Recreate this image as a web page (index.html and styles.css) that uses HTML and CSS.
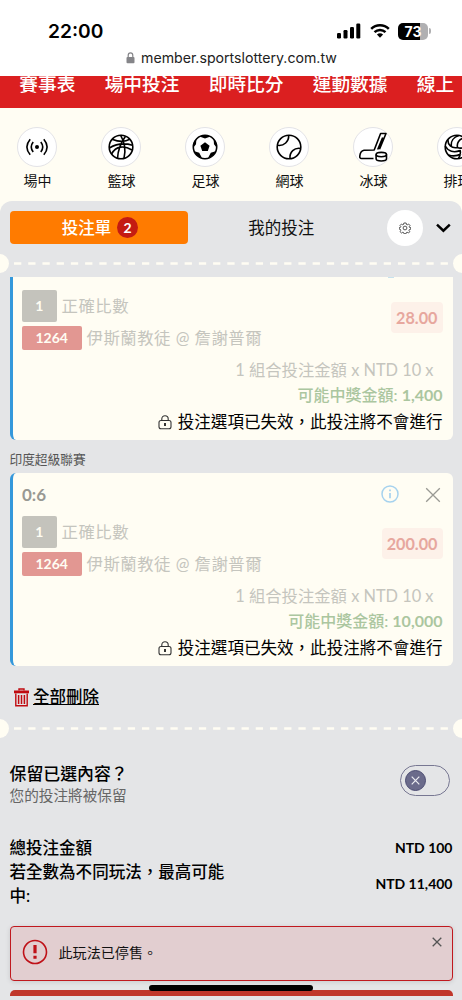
FILE: index.html
```html
<!DOCTYPE html>
<html lang="zh-Hant">
<head>
<meta charset="utf-8">
<title>投注單</title>
<link rel="stylesheet" href="styles.css">
</head>
<body>
<div class="screen">
  <header class="status">
    <div class="status-row">
      <span class="clock">22:00</span>
      <div class="indicators">
        <svg class="signal" width="24" height="16" viewBox="0 0 24 16"><rect x="0" y="10" width="4" height="5.500" rx="1.200"/><rect x="6.500" y="7" width="4" height="8.500" rx="1.200"/><rect x="13" y="4" width="4" height="11.500" rx="1.200"/><rect x="19.300" y="0.500" width="4" height="15" rx="1.200"/></svg>
        <svg class="wifi" width="20" height="16" viewBox="0 0 20 16"><path d="M1.200 5.900A12.600 12.600 0 0 1 18.800 5.900M4.500 9.200A8 8 0 0 1 15.500 9.200" fill="none" stroke="#000" stroke-width="2.500"/><path d="M10 14.700L6.900 11.600a4.500 4.500 0 0 1 6.200 0z"/></svg>
        <div class="battery"><span>73</span></div><i class="battery-tip"></i>
      </div>
    </div>
    <div class="address">
      <svg width="9" height="12" viewBox="0 0 9 12"><rect x="0.500" y="5" width="8" height="6.300" rx="1" fill="#858589"/><path d="M2.200 5.500V3.500a2.300 2.600 0 0 1 4.600 0v2" fill="none" stroke="#858589" stroke-width="1.200"/></svg>
      <span>member.sportslottery.com.tw</span>
    </div>
  </header>

  <nav class="nav"><span>賽事表</span><span>場中投注</span><span>即時比分</span><span>運動數據</span><span>線上</span></nav>

  <div class="sports">
    <div class="sport"><div class="disc"><svg width="28" height="28" viewBox="0 0 28 28"><g class="ln"><path d="M7.200 6.200Q0.600 14 7.200 21.800M20.800 6.200Q27.400 14 20.800 21.800M10.200 9Q6.300 14 10.200 19M17.800 9Q21.700 14 17.800 19"/></g><circle cx="14" cy="14" r="2"/></svg></div><span>場中</span></div>
    <div class="sport"><div class="disc"><svg width="28" height="28" viewBox="0 0 28 28"><g class="ln"><circle cx="14" cy="14" r="11.800"/><path d="M13.500 2.200C17 8 19 17 17 25.300M5 6.200C12 9 19 8.500 22.800 6.300M2.400 15C9 11 18 10 25.500 12.300M4.500 21C9 13 17 12 25 17M10.500 25.200C11 17 15 8 18.500 3.200"/></g></svg></div><span>籃球</span></div>
    <div class="sport"><div class="disc"><svg width="28" height="28" viewBox="0 0 28 28"><g class="ln"><circle cx="14" cy="14" r="11.700"/></g><path d="M14 9.200l4.600 3.500-1.800 5.400h-5.600l-1.800-5.400zM8.500 3.600L14 5.600l5.500-2Q14 .8 8.500 3.600zM22.600 6l.4 5.300 3 3.600Q26.600 9.500 22.600 6zM24.600 18.300l-4.800 1.500-2.800 5.200Q22.500 24 24.600 18.300zM11 25l-2.800-5.200-4.800-1.500Q5.500 24 11 25zM2 14.900l3-3.600L5.400 6Q1.400 9.500 2 14.900z"/></svg></div><span>足球</span></div>
    <div class="sport"><div class="disc"><svg width="28" height="28" viewBox="0 0 28 28"><g class="ln"><circle cx="14" cy="14" r="11.800"/><path d="M13.700 2.300C14 8.500 9 13.300 2.500 12.300M15 25.600C14.400 19 19.300 14.400 25.700 15.500"/></g></svg></div><span>網球</span></div>
    <div class="sport"><div class="disc"><svg width="30" height="30" viewBox="0 0 30 30"><g class="ln"><path d="M15.500 26.500H3.500Q1.500 26.500 1.800 24Q2.300 19 6 18.300L16.200 18L22.600 1.500H28L21.500 17.200M24.700 5.500L19.700 17.500"/><ellipse cx="23.300" cy="22.600" rx="5.200" ry="2.200"/><path d="M18.100 22.600v4.200c0 3 10.400 3 10.400 0v-4.200"/></g></svg></div><span>冰球</span></div>
    <div class="sport"><div class="disc"><svg width="28" height="28" viewBox="0 0 28 28"><g class="ln"><circle cx="14" cy="14" r="11.800"/><path d="M5 6.500C4.500 12 8.500 15.500 14.500 14.500M2.300 13C5 18.500 11 20 17 17.500M5.500 22C10 23.500 14.500 23 18 20.500M14.500 14.500C13.500 10 16 6 21.500 5M8.500 14C7.500 8.500 10.500 4 16 2.500M14.500 14.500C18 16 22 14 25 10M17 17c1 3 0 6-1.500 8.500"/></g></svg></div><span>排球</span></div>
  </div>

  <main class="slip">
    <div class="tabs">
      <div class="tab active"><span>投注單</span><b>2</b></div>
      <div class="tab">我的投注</div>
      <div class="gear"><svg width="12" height="12" viewBox="0 0 24 24"><g fill="none" stroke="#444" stroke-width="1.800" stroke-linejoin="round"><circle cx="12" cy="12" r="3.800"/><path d="M9.700 2h4.600l.7 3 1.500.6L19.200 4 22 7l-1.600 2.500.4 1.200 2.700.3v3.500l-3 .9-.6 1.300 1.600 2.800L19 22l-2.800-1.600-1.300.5-.8 2.600H9.900l-.9-2.600-1.300-.5L5 22l-3-2.800 1.600-2.600L3 15l-2.500-.6V11l2.700-.5.5-1.300L2 7l3-3 2.500 1.600L9 5z"/></g></svg></div>
      <svg class="chev" width="15" height="10" viewBox="0 0 15 10"><path d="M1 1.700l6.400 6 6.400-6" fill="none" stroke="#000" stroke-width="2.500"/></svg>
    </div>
    <div class="perforation"><i></i><svg width="434" height="3"><path d="M0 1.500H434" stroke="#fffdf3" stroke-width="2.600" stroke-dasharray="7.300 6.920"/></svg><i></i></div>

    <section class="bet clipped">
      <i class="info-edge"></i>
      <div class="pick">
        <div class="match"><div class="line"><b class="num">1</b><span>正確比數</span></div><div class="line"><b class="code">1264</b><span>伊斯蘭教徒 @ 詹謝普爾</span></div></div>
        <b class="odds">28.00</b>
      </div>
      <div class="stake">1 組合投注金額 x NTD 10 x</div>
      <div class="win">可能中獎金額: <b>1,400</b></div>
      <div class="invalid"><svg width="14" height="15" viewBox="0 0 14 15"><g fill="none" stroke="#333" stroke-width="1.100"><rect x="1" y="5.500" width="12" height="8.300" rx="2"/><path d="M3.800 5.500V4a3.200 3.200 0 0 1 6.400 0v1.500"/></g><path d="M7 8v3" stroke="#111" stroke-width="1.700"/></svg><span>投注選項已失效，此投注將不會進行</span></div>
    </section>

    <div class="league">印度超級聯賽</div>

    <section class="bet">
      <div class="bet-head"><b>0:6</b>
        <svg width="18" height="18" viewBox="0 0 18 18"><circle cx="9" cy="9" r="8" fill="none" stroke="#a6d2ee" stroke-width="1.500"/><path d="M9 4.600v1.700M9 8v5.300" stroke="#a6d2ee" stroke-width="1.700"/></svg>
        <svg width="16" height="16" viewBox="0 0 16 16"><path d="M1.200 1.200l13.600 13.600M14.800 1.200L1.200 14.800" stroke="#999993" stroke-width="1.300"/></svg>
      </div>
      <div class="pick">
        <div class="match"><div class="line"><b class="num">1</b><span>正確比數</span></div><div class="line"><b class="code">1264</b><span>伊斯蘭教徒 @ 詹謝普爾</span></div></div>
        <b class="odds">200.00</b>
      </div>
      <div class="stake">1 組合投注金額 x NTD 10 x</div>
      <div class="win">可能中獎金額: <b>10,000</b></div>
      <div class="invalid"><svg width="14" height="15" viewBox="0 0 14 15"><g fill="none" stroke="#333" stroke-width="1.100"><rect x="1" y="5.500" width="12" height="8.300" rx="2"/><path d="M3.800 5.500V4a3.200 3.200 0 0 1 6.400 0v1.500"/></g><path d="M7 8v3" stroke="#111" stroke-width="1.700"/></svg><span>投注選項已失效，此投注將不會進行</span></div>
    </section>

    <div class="clear"><svg width="15" height="19" viewBox="0 0 15 19"><g fill="none" stroke="#c00b10" stroke-width="1.400"><path d="M5 2.500V1h5v1.500M1.800 5.500v12.200h11.400V5.500"/><path d="M4.600 7v9M7.500 7v9M10.400 7v9" stroke-width="1.500"/></g><path d="M0 2.500h15v2.800H0z" fill="#c00b10"/></svg><span>全部刪除</span></div>

    <div class="perforation lower"><i></i><svg width="434" height="3"><path d="M0 1.500H434" stroke="#fffdf3" stroke-width="2.600" stroke-dasharray="7.300 6.920"/></svg><i></i></div>

    <div class="keep">
      <div><div class="keep-title">保留已選內容？</div><div class="keep-sub">您的投注將被保留</div></div>
      <div class="switch"><span><svg width="9" height="9" viewBox="0 0 9 9"><path d="M.7.7l7.600 7.600M8.300.7L.7 8.300" stroke="#eeeef3" stroke-width="1.200"/></svg></span></div>
    </div>

    <div class="totals">
      <div class="total"><span>總投注金額</span><b>NTD 100</b></div>
      <div class="total"><span>若全數為不同玩法，最高可能中:</span><b>NTD 11,400</b></div>
    </div>

    <div class="alert">
      <svg width="26" height="26" viewBox="0 0 26 26"><circle cx="13" cy="13" r="11.500" fill="none" stroke="#bf1118" stroke-width="1.600"/><path d="M13 6v8.200M13 16.800v3" stroke="#bf1118" stroke-width="3.200"/></svg>
      <span>此玩法已停售。</span>
      <svg class="dismiss" width="10" height="10" viewBox="0 0 10 10"><path d="M.7.7l8.600 8.600M9.300.7L.7 9.300" stroke="#555" stroke-width="1.300"/></svg>
    </div>
    <div class="submit"></div>
  </main>
  <div class="home-bar"></div>
</div>
</body>
</html>
```

FILE: styles.css
```css
* { box-sizing: border-box; }
body { margin: 0; font-family: Lato, "Noto Sans CJK TC", sans-serif; color: #111; }
svg { display: block; flex: none; }
.screen { position: relative; width: 462px; height: 1000px; overflow: hidden; background: #fffdf3; }

.status { height: 76px; background: #fff; padding-top: 20px; font-family: Inter, sans-serif; }
.status-row { display: flex; justify-content: space-between; height: 22px; padding: 0 31px 0 48px; align-items: center; }
.clock { font-size: 19.200px; font-weight: 600; line-height: 22px; color: #000; }
.indicators { display: flex; align-items: center; }
.wifi { margin: 0 8px 0 9px; }
.battery { width: 30px; height: 17px; border-radius: 5px; background: linear-gradient(90deg, #000 73%, #b0b0b2 73%); color: #fff; font-size: 14px; font-weight: 700; line-height: 17px; text-align: center; }
.battery-tip { width: 2px; height: 6px; margin-left: 1px; border-radius: 0 2px 2px 0; background: #b0b0b2; }
.address { display: flex; gap: 6px; align-items: center; height: 18px; margin-top: 7px; padding-left: 126px; font-size: 14.150px; color: #222; line-height: 18px; white-space: nowrap; }

.nav { display: flex; gap: 29.300px; height: 32px; padding-left: 19.300px; overflow: hidden; background: #db1f20; color: #fff; font-size: 18.700px; font-weight: 500; line-height: 17px; white-space: nowrap; }

.sports { display: flex; gap: 44px; width: 540px; height: 93px; padding: 19px 0 0 17.400px; }
.sport { width: 40px; flex: none; display: flex; flex-direction: column; align-items: center; font-size: 14px; line-height: 20px; white-space: nowrap; }
.sport > span { margin-top: 4px; }
.disc { width: 40px; height: 40px; border: 1px solid #e3e3e7; border-radius: 50%; background: #fff; display: flex; align-items: center; justify-content: center; }
.ln { fill: none; stroke: #000; stroke-width: 1.600; stroke-linejoin: round; }

.slip { height: 799px; border-radius: 12px 12px 0 0; background: #e4e5e7; }
.tabs { display: flex; align-items: center; height: 53px; padding: 0 11px 0 9.500px; }
.tab { width: 179px; height: 33px; display: flex; align-items: center; justify-content: center; gap: 6px; font-size: 16.500px; line-height: 24px; }
.tab:nth-child(2) { width: 185px; padding-left: 1px; }
.tab.active { padding-left: 2px; background: #ff7b00; border-radius: 4px; color: #fff; font-weight: 500; }
.tab.active b { width: 21px; height: 21px; border-radius: 50%; background: #c41b12; font-size: 14px; line-height: 21px; text-align: center; }
.gear { width: 36px; height: 36px; margin-left: 14px; border-radius: 50%; background: #fff; display: flex; align-items: center; justify-content: center; }
.chev { margin-left: 13px; }

.perforation { display: flex; align-items: center; justify-content: center; height: 19px; gap: 5px; margin: 0 -10px; }
.perforation i { width: 19px; height: 19px; border-radius: 50%; flex: none; background: #fffdf3; }

.bet { margin: 0 9.500px; height: 193px; padding: 0 10px 0 9.500px; border-left: 3.500px solid #3498db; border-radius: 6px; background: #fffdf3; }
.bet.clipped { position: relative; height: 163px; margin-top: 4px; padding-top: 13px; border-radius: 0 0 6px 6px; }
.info-edge { position: absolute; left: 375px; top: 0; width: 6px; height: 1px; background: #c7e2ed; }
.bet-head { display: flex; align-items: center; height: 43px; color: #999993; }
.bet-head b { flex: 1; font-size: 17px; }
.bet-head svg { margin-top: -1px; }
.bet-head svg + svg { margin: 0 2px 0 26px; }
.pick { display: flex; align-items: center; justify-content: space-between; height: 60px; }
.match { display: flex; flex-direction: column; gap: 4px; }
.line { display: flex; align-items: center; gap: 5px; font-size: 16.400px; letter-spacing: .5px; line-height: 24px; color: #c5c5be; white-space: nowrap; }
.line b { font-size: 14px; letter-spacing: 0; color: #fffdf3; text-align: center; border-radius: 2px; }
.num { width: 34.500px; height: 32px; background: #c4c3bc; line-height: 32px; }
.code { width: 59.500px; height: 24px; background: #e29792; line-height: 24px; }
.odds { padding: 0 5px; height: 31px; margin-top: -6px; border-radius: 4px; background: #fdf1e9; color: #e7a79e; font-size: 16.200px; line-height: 31px; }
.stake { margin-top: 7px; padding-right: 9px; height: 25px; text-align: right; font-size: 16.350px; line-height: 25px; color: #c5c5be; }
.win { height: 25px; text-align: right; font-size: 16px; font-weight: 500; line-height: 25px; color: #abc69f; }
.invalid { display: flex; justify-content: flex-end; align-items: center; gap: 6px; height: 31px; font-size: 16.560px; line-height: 31px; color: #000; }
.league { height: 33px; padding: 0 9.500px; font-size: 12.700px; line-height: 38px; color: #555; }

.clear { display: flex; align-items: center; gap: 4px; height: 62px; padding-left: 14px; font-size: 16.500px; font-weight: 500; line-height: 24px; color: #000; text-decoration: underline; }
.perforation.lower { margin-top: -9px; }
.keep { display: flex; justify-content: space-between; align-items: flex-start; height: 48px; margin-top: 24px; padding: 0 12px 0 9.500px; }
.keep-title { font-size: 16.900px; font-weight: 500; line-height: 24px; color: #000; }
.keep-sub { font-size: 14.650px; line-height: 20px; color: #666; }
.switch { width: 50px; height: 31px; margin-top: 3px; border: 1.300px solid #777792; border-radius: 16px; padding: 4px; }
.switch span { width: 21px; height: 21px; border: 1px solid #4c4c72; border-radius: 50%; background: #6b6b8b; display: flex; align-items: center; justify-content: center; }
.totals { margin-top: 26px; padding: 0 9.500px; }
.total { display: flex; justify-content: space-between; align-items: center; font-size: 16.550px; font-weight: 500; line-height: 24px; color: #000; }
.total span { width: 218px; }
.total b { margin-top: -1px; font-size: 14px; }

.alert { display: flex; align-items: center; height: 55px; margin: 18px 9.500px 0; padding: 0 10px 4px 11px; border: 1.500px solid #c0191f; border-radius: 4px; background: #e2ced0; box-shadow: 0 1px 5px rgba(0,0,0,.12); font-size: 14.100px; line-height: 24px; }
.alert span { flex: 1; margin-left: 11px; padding-top: 3px; }
.dismiss { align-self: flex-start; margin-top: 10px; }
.submit { height: 6px; margin: 9px 9.500px 0; border-radius: 5px 5px 0 0; background: #c0372b; }
.home-bar { position: absolute; left: 149px; bottom: 9px; width: 164px; height: 6px; border-radius: 3px; background: #000; }
```
